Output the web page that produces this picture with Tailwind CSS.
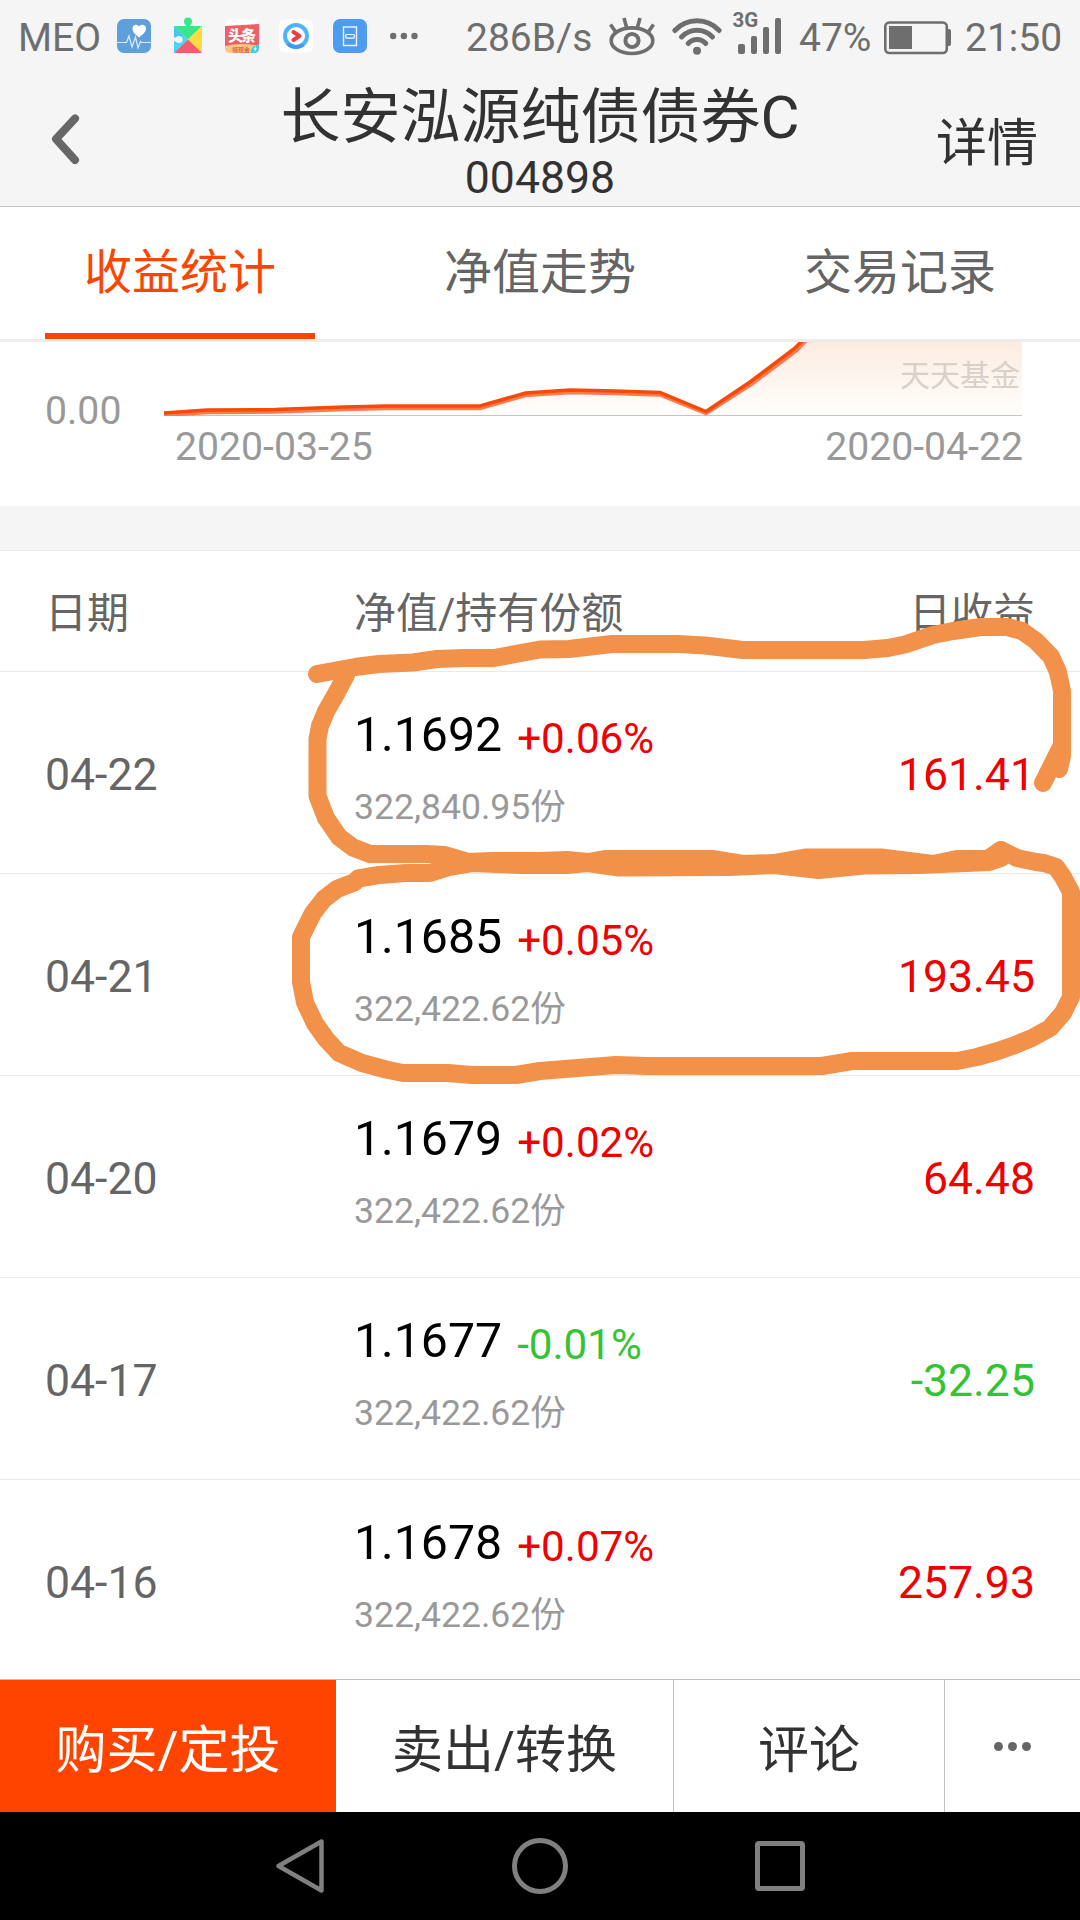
<!DOCTYPE html>
<html lang="zh-CN">
<head>
    <meta charset="UTF-8">
    <meta name="viewport" content="width=device-width, initial-scale=1.0">
    <title>长安泓源纯债债券C</title>
    <script src="https://cdn.jsdelivr.net/npm/@tailwindcss/browser@4"></script>
</head>
<body class="bg-black">
    <div class="relative w-[1080px] h-[1920px] overflow-hidden flex flex-col bg-white font-['Roboto','Noto_Sans_CJK_SC',sans-serif]">

        <!-- Status bar -->
        <div class="h-[72px] shrink-0 bg-[#f5f5f5] flex items-center text-[39px] leading-[72px] text-[#6e6e6e] whitespace-nowrap">
            <span class="w-[98px] pl-[18px] pt-[3px] shrink-0">MEO</span>
            <svg class="ml-[19px] size-[34px] shrink-0" viewBox="0 0 34 34">
                <rect width="34" height="34" rx="7" fill="#5f9fdc"/>
                <path d="M22 18.5C17 14.500 15.500 12.500 15.500 9.500C15.500 5.500 20 4.500 22 7.500C24 4.500 29 5.500 29 9.500C29 12.500 27 14.500 22 18.500Z" fill="#fff"/>
                <path d="M0 23.500H9.500L12 17L15 28L18.500 18L21 29L23.500 22.500L25 23.500H34" fill="none" stroke="#dcecfa" stroke-width="1.200"/>
            </svg>
            <svg class="ml-[23px] w-[28px] h-[36px] shrink-0 -mt-[2px]" viewBox="0 0 28 36">
                <path d="M0 9L14 22.500L0 36Z" fill="#45d5f5"/>
                <path d="M0 9H28L14 22.500Z" fill="#3be58a"/>
                <path d="M28 9V36L14 22.500Z" fill="#fbdc3c"/>
                <path d="M0 36H28L14 22.500Z" fill="#f25c6c"/>
                <path d="M0 9L9 18L0 27Z" fill="#4cc3ef"/>
                <circle cx="14" cy="4.500" r="4" fill="#3be58a"/>
                <rect x="12" y="6" width="4" height="4" fill="#3be58a"/>
                <circle cx="5" cy="22.500" r="3.600" fill="#f5f5f5"/>
                <rect x="0" y="20.500" width="4" height="4" fill="#f5f5f5"/>
            </svg>
            <svg class="ml-[23px] size-[34px] shrink-0" viewBox="0 0 34 34">
                <rect width="34" height="34" rx="6" fill="#fdfdfd"/>
                <path d="M0 7L34 5V27H0Z" fill="#ef5f66"/>
                <path d="M0 27Q17 23 34 27V29Q34 34 29 34H5Q0 34 0 29Z" fill="#f9c886"/>
                <text x="17" y="22" text-anchor="middle" font-family="Noto Sans CJK SC" font-weight="900" font-size="15" fill="#fff" textLength="28">头条</text>
                <text x="16" y="32.500" text-anchor="middle" font-family="Noto Sans CJK SC" font-weight="700" font-size="6" fill="#e0663c">领现金</text>
                <path d="M26 34Q25 27 34 25.500V29Q34 34 29 34Z" fill="#3fc9ea"/>
                <path d="M31 26.500L28.500 30.500H30L29.500 33L32 29.500H30.500Z" fill="#fff"/>
            </svg>
            <svg class="ml-[20px] size-[34px] shrink-0" viewBox="0 0 34 34">
                <rect width="34" height="34" rx="7" fill="#fdfdfd"/>
                <circle cx="17" cy="17" r="11" fill="none" stroke="#4fb4f3" stroke-width="4"/>
                <path d="M9 24.500A11 11 0 0 0 24 25.500" fill="none" stroke="#3d9af0" stroke-width="4"/>
                <path d="M14.500 13L20.500 17L14.500 21" fill="none" stroke="#ea3f48" stroke-width="4" stroke-linecap="round" stroke-linejoin="round"/>
            </svg>
            <svg class="ml-[20px] size-[34px] shrink-0" viewBox="0 0 34 34">
                <rect width="34" height="34" rx="7" fill="#4e9cf0"/>
                <path d="M10.500 8H23.500V26.500H10.500Z" fill="none" stroke="#eaf4ff" stroke-width="1.400"/>
                <rect x="12.700" y="15.500" width="8.600" height="3.600" rx="1" fill="none" stroke="#fff" stroke-width="1.200"/>
            </svg>
            <svg class="ml-[22px] w-[30px] h-[8px] shrink-0" viewBox="0 0 30 8" fill="#6e6e6e">
                <circle cx="4.200" cy="4" r="3.200"/><circle cx="14.900" cy="4" r="3.200"/><circle cx="25.500" cy="4" r="3.200"/>
            </svg>
            <span class="ml-[47px] w-[127px] pt-[3px] shrink-0">286B/s</span>
            <svg class="ml-[15px] w-[48px] h-[40px] shrink-0" viewBox="0 0 48 40" fill="none" stroke="#6e6e6e" stroke-width="3.600">
                <ellipse cx="24" cy="24.700" rx="20.800" ry="12.800"/>
                <circle cx="24" cy="24.500" r="6.600" stroke-width="4"/>
                <path d="M8 16.500L2.500 8.500M18.500 11L16 2M29.500 11L32 2M40 16.500L45.500 8.500"/>
            </svg>
            <svg class="ml-[15px] w-[52px] h-[40px] shrink-0" viewBox="0 0 52 40" fill="none" stroke="#6e6e6e" stroke-width="5" stroke-linecap="round">
                <path d="M3.800 14.500C16 1.500 36 1.500 48.200 14.500"/>
                <path d="M10.500 21C19 12 33 12 41.500 21"/>
                <path d="M17.200 27.500C22 22.200 30 22.200 34.800 27.500"/>
                <circle cx="26" cy="34.800" r="4" fill="#6e6e6e" stroke="none"/>
            </svg>
            <svg class="ml-[7px] w-[54px] h-[54px] shrink-0 overflow-visible" viewBox="-2 0 54 54" fill="#6e6e6e">
                <text x="0.500" y="18" font-family="Roboto" font-weight="700" font-size="20.500">3G</text>
                <rect x="6" y="35" width="7" height="10" rx="2"/>
                <rect x="19" y="27" width="6" height="18" rx="2"/>
                <rect x="31" y="18" width="6" height="27" rx="2"/>
                <rect x="43" y="9" width="6" height="36" rx="2"/>
            </svg>
            <span class="ml-[15px] w-[74px] pt-[3px] shrink-0">47%</span>
            <svg class="ml-[11px] w-[68px] h-[34px] shrink-0 mt-[3px]" viewBox="0 0 68 34">
                <rect x="1.300" y="1.500" width="61.500" height="30.500" rx="4" fill="none" stroke="#6e6e6e" stroke-width="2.600"/>
                <rect x="5" y="5" width="23" height="23" fill="#6e6e6e"/>
                <path d="M64 8H65Q67 8 67 10V23Q67 25 65 25H64Z" fill="#6e6e6e"/>
            </svg>
            <span class="ml-[13px] pt-[3px]">21:50</span>
        </div>

        <!-- Title bar -->
        <div class="h-[135px] shrink-0 bg-[#f5f5f5] border-b border-[#c4c4c4] flex text-[#323232]">
            <div class="w-[240px] pl-[46px] pt-[39px]">
                <svg class="w-[40px] h-[56px]" viewBox="0 0 40 56" fill="none" stroke="#676767" stroke-width="8" stroke-linecap="round" stroke-linejoin="round">
                    <path d="M29 7.500L10 28L29 49"/>
                </svg>
            </div>
            <div class="w-[600px] pt-[13px] text-center whitespace-nowrap">
                <h1 class="text-[60px] leading-[66px]">长安泓源纯债债券C</h1>
                <p class="text-[44.6px] leading-[54px]">004898</p>
            </div>
            <div class="w-[240px] pr-[42px] pt-[3px] text-right text-[51px] leading-[138px]">详情</div>
        </div>

        <!-- Tabs -->
        <div class="h-[135px] shrink-0 border-b-3 border-[#ececec] flex text-[48px] leading-[132px] text-[#656565] text-center">
            <div class="w-[360px] px-[45px]"><div class="h-[132px] border-b-6 border-[#fb4603] text-[#fb4603]">收益统计</div></div>
            <div class="w-[360px]">净值走势</div>
            <div class="w-[360px]">交易记录</div>
        </div>

        <!-- Chart -->
        <div class="h-[164px] shrink-0 flex text-[39.2px] text-[#999999]">
            <div class="w-[164px] pl-[45px] pt-[46px] leading-[46px]">0.00</div>
            <div class="w-[859px]">
                <div class="relative h-[74px]">
                    <svg class="w-[858px] h-[74px] block" viewBox="164 342 858 74">
                        <defs>
                            <linearGradient id="fade" x1="0" y1="342" x2="0" y2="415" gradientUnits="userSpaceOnUse">
                                <stop offset="0" stop-color="#fcece0"/>
                                <stop offset="1" stop-color="#fffefc"/>
                            </linearGradient>
                        </defs>
                        <path d="M164 414L207 411L275 410.500L344 408L386 407H480L525.500 394L570 391L615 392L660 393.500L705 412L751 382.500L795.500 349L803 342H1022V415H164Z" fill="url(#fade)"/>
                        <path d="M164 415.500H1022" stroke="#c4c4c4"/>
                        <path d="M164 415L207 412L275 411.500L344 409L386 408H480L525.500 395L570 392L615 393L660 394.500L706 413L752 383.500L796.500 350L806 340" fill="none" stroke="#ff7a4c" stroke-width="4.500"/>
                        <path d="M164 413L207 410L275 409.500L344 407L386 406H480L525.500 393L570 390L615 391L660 392.500L706 411.500L750 382L794.500 348.500L803 340" fill="none" stroke="#f54a0a" stroke-width="3.500"/>
                    </svg>
                    <span class="absolute right-[3px] top-[13px] text-[30px] leading-[42px] text-[#d9d0ca]">天天基金</span>
                </div>
                <div class="flex justify-between pl-[11px] leading-[62px]">
                    <span>2020-03-25</span>
                    <span>2020-04-22</span>
                </div>
            </div>
        </div>
        <div class="h-[45px] shrink-0 bg-[#f5f5f5] border-b border-[#e9e9e9]"></div>

        <!-- Table -->
        <div class="h-[121px] shrink-0 border-b border-[#e9e9e9] flex px-[45px] text-[42px] leading-[126px] text-[#656565]">
            <div class="w-[309px]">日期</div>
            <div class="grow">净值/持有份额</div>
            <div>日收益</div>
        </div>
        <div id="rows" class="h-[1007px] shrink-0 overflow-hidden"></div>

        <!-- Bottom actions -->
        <div class="h-[133px] shrink-0 border-t border-[#bdbdbd] flex bg-white text-[51px] leading-[142px] text-center text-[#323232]">
            <div class="w-[336px] bg-[#ff4400] text-white">购买/定投</div>
            <div class="w-[338px] border-r border-[#c4c4c4]">卖出/转换</div>
            <div class="w-[271px] border-r border-[#c4c4c4]">评论</div>
            <div class="grow flex items-center justify-center gap-[5px] pr-[1px]">
                <i class="size-[9px] rounded-full bg-[#656565]"></i>
                <i class="size-[9px] rounded-full bg-[#656565]"></i>
                <i class="size-[9px] rounded-full bg-[#656565]"></i>
            </div>
        </div>

        <!-- Android nav -->
        <div class="h-[108px] shrink-0 bg-black flex justify-center items-center gap-[184px]">
            <svg class="size-[56px]" viewBox="0 0 56 56" fill="none" stroke="#808080" stroke-width="4.500" stroke-linejoin="round">
                <path d="M49.500 3.500V52.500L6.500 28Z"/>
            </svg>
            <svg class="size-[56px]" viewBox="0 0 56 56" fill="none" stroke="#808080" stroke-width="5">
                <circle cx="28" cy="28" r="25.500"/>
            </svg>
            <svg class="size-[56px]" viewBox="0 0 56 56" fill="none" stroke="#808080" stroke-width="5">
                <rect x="5.500" y="5.500" width="45" height="45" rx="1.500"/>
            </svg>
        </div>

        <!-- Marker strokes over the table -->
        <svg class="absolute inset-0 w-[1080px] h-[1920px] pointer-events-none" viewBox="0 0 1080 1920" fill="none" stroke="#f29149" stroke-width="18" stroke-linecap="round" stroke-linejoin="round">
            <path d="M317 674L355 667L379 664L413 662.500L437 659L465 658H494L540 649.500L569 649L612 644H678L705 645.500L743 650H864L888 648L905 644.500L933 635L953 631L981 627H1007L1022 631L1036 641L1051 656.500L1058 672L1062 691V756L1059 769M1061 747L1043 783"/>
            <path d="M346 675L336 694L326 711.500L320 726L317.500 739V796L326 818L339 837L353 847.500L370 854H427L444 855L468 862L492 861L540 861L567 860L588 862L605 859H712L743 864L774 863L805 857.500H881L933 864L957 859H988L1001 850"/>
            <path d="M1001 850L1017 858L1036 862L1044 863L1056 867L1063 877L1071 892V997L1063 1013L1050 1028L1032 1038L1015 1045L998 1051L977 1057L957 1061H852L822 1066H647L616 1065L540 1071L516 1075H472L448 1073H403L386 1069.500L362 1063L339 1053L326 1039L315 1023.500L305 1002.500L301 982V937L313 913L324 899L337 889L355 882L358 878.500L379 875L406 873H430L451 866.500L472 863L520 865H567L588 863L619 867.500L729 867L774 865L819 870L864 865.500L919 865L989 862L1001 858"/>
        </svg>
    </div>

    <script>
        const rows = [
            ['04-22', '1.1692', '+0.06%', '322,840.95', '161.41'],
            ['04-21', '1.1685', '+0.05%', '322,422.62', '193.45'],
            ['04-20', '1.1679', '+0.02%', '322,422.62', '64.48'],
            ['04-17', '1.1677', '-0.01%', '322,422.62', '-32.25'],
            ['04-16', '1.1678', '+0.07%', '322,422.62', '257.93'],
        ];

        document.getElementById('rows').innerHTML = rows.map(([date, nav, pct, share, profit]) => {
            const color = pct[0] === '-' ? 'text-[#33c433]' : 'text-[#f00000]';
            return `
            <div class="h-[202px] border-b border-[#e9e9e9] flex px-[45px] text-[44.6px] leading-[207px]">
                <div class="w-[309px] text-[#656565]">${date}</div>
                <div class="grow pt-[27px]">
                    <div class="flex leading-[72px]">
                        <span class="text-[48.2px] text-black">${nav}</span>
                        <span class="ml-[15px] pt-[4px] text-[42.2px] ${color}">${pct}</span>
                    </div>
                    <div class="text-[35.6px] leading-[65px] text-[#999999]">${share}份</div>
                </div>
                <div class="${color}">${profit}</div>
            </div>`;
        }).join('');
    </script>
</body>
</html>
